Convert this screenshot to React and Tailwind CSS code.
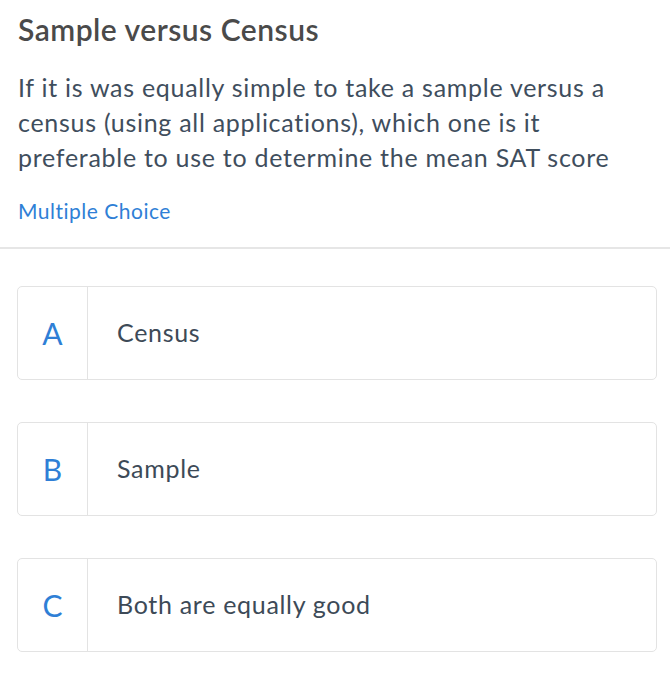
import React from 'react';

const options = [
  { letter: 'A', text: 'Census' },
  { letter: 'B', text: 'Sample' },
  { letter: 'C', text: 'Both are equally good' },
];

const OptionRow = ({ letter, text }) => (
  <div className="flex h-[94px] rounded-[5px] border border-[#e3e3e3] bg-white">
    <div className="flex w-[70px] shrink-0 items-center justify-center border-r border-[#e3e3e3] text-[30px] text-[#2f7fd6]">
      {letter}
    </div>
    <div className="flex items-center pl-[29px] text-[25px] tracking-[0.7px] text-[#3d4a57]">{text}</div>
  </div>
);

export default function App() {
  return (
    <div className="min-h-[690px] w-[670px] bg-white font-['Lato',sans-serif]">
      <div className="px-[18px] pb-[22px] pt-[10px]">
        <h1 className="text-[30px] font-semibold leading-[38px] tracking-[0.5px] text-[#4a4a4a]">Sample versus Census</h1>
        <p className="mt-[22px] text-[25px] leading-[35px] tracking-[0.72px] text-[#3f4e5d]">
          If it is was equally simple to take a sample versus a census (using all applications), which one is it
          preferable to use to determine the mean SAT score
        </p>
        <div className="mt-[22px] text-[21px] leading-[28px] tracking-[0.5px] text-[#2f7fd6]">Multiple Choice</div>
      </div>
      <div className="h-[2px] bg-[#e6e6e6]" />
      <div className="flex flex-col gap-[42px] pl-[17px] pr-[13px] pt-[37px]">
        {options.map((o) => (
          <OptionRow key={o.letter} {...o} />
        ))}
      </div>
    </div>
  );
}
